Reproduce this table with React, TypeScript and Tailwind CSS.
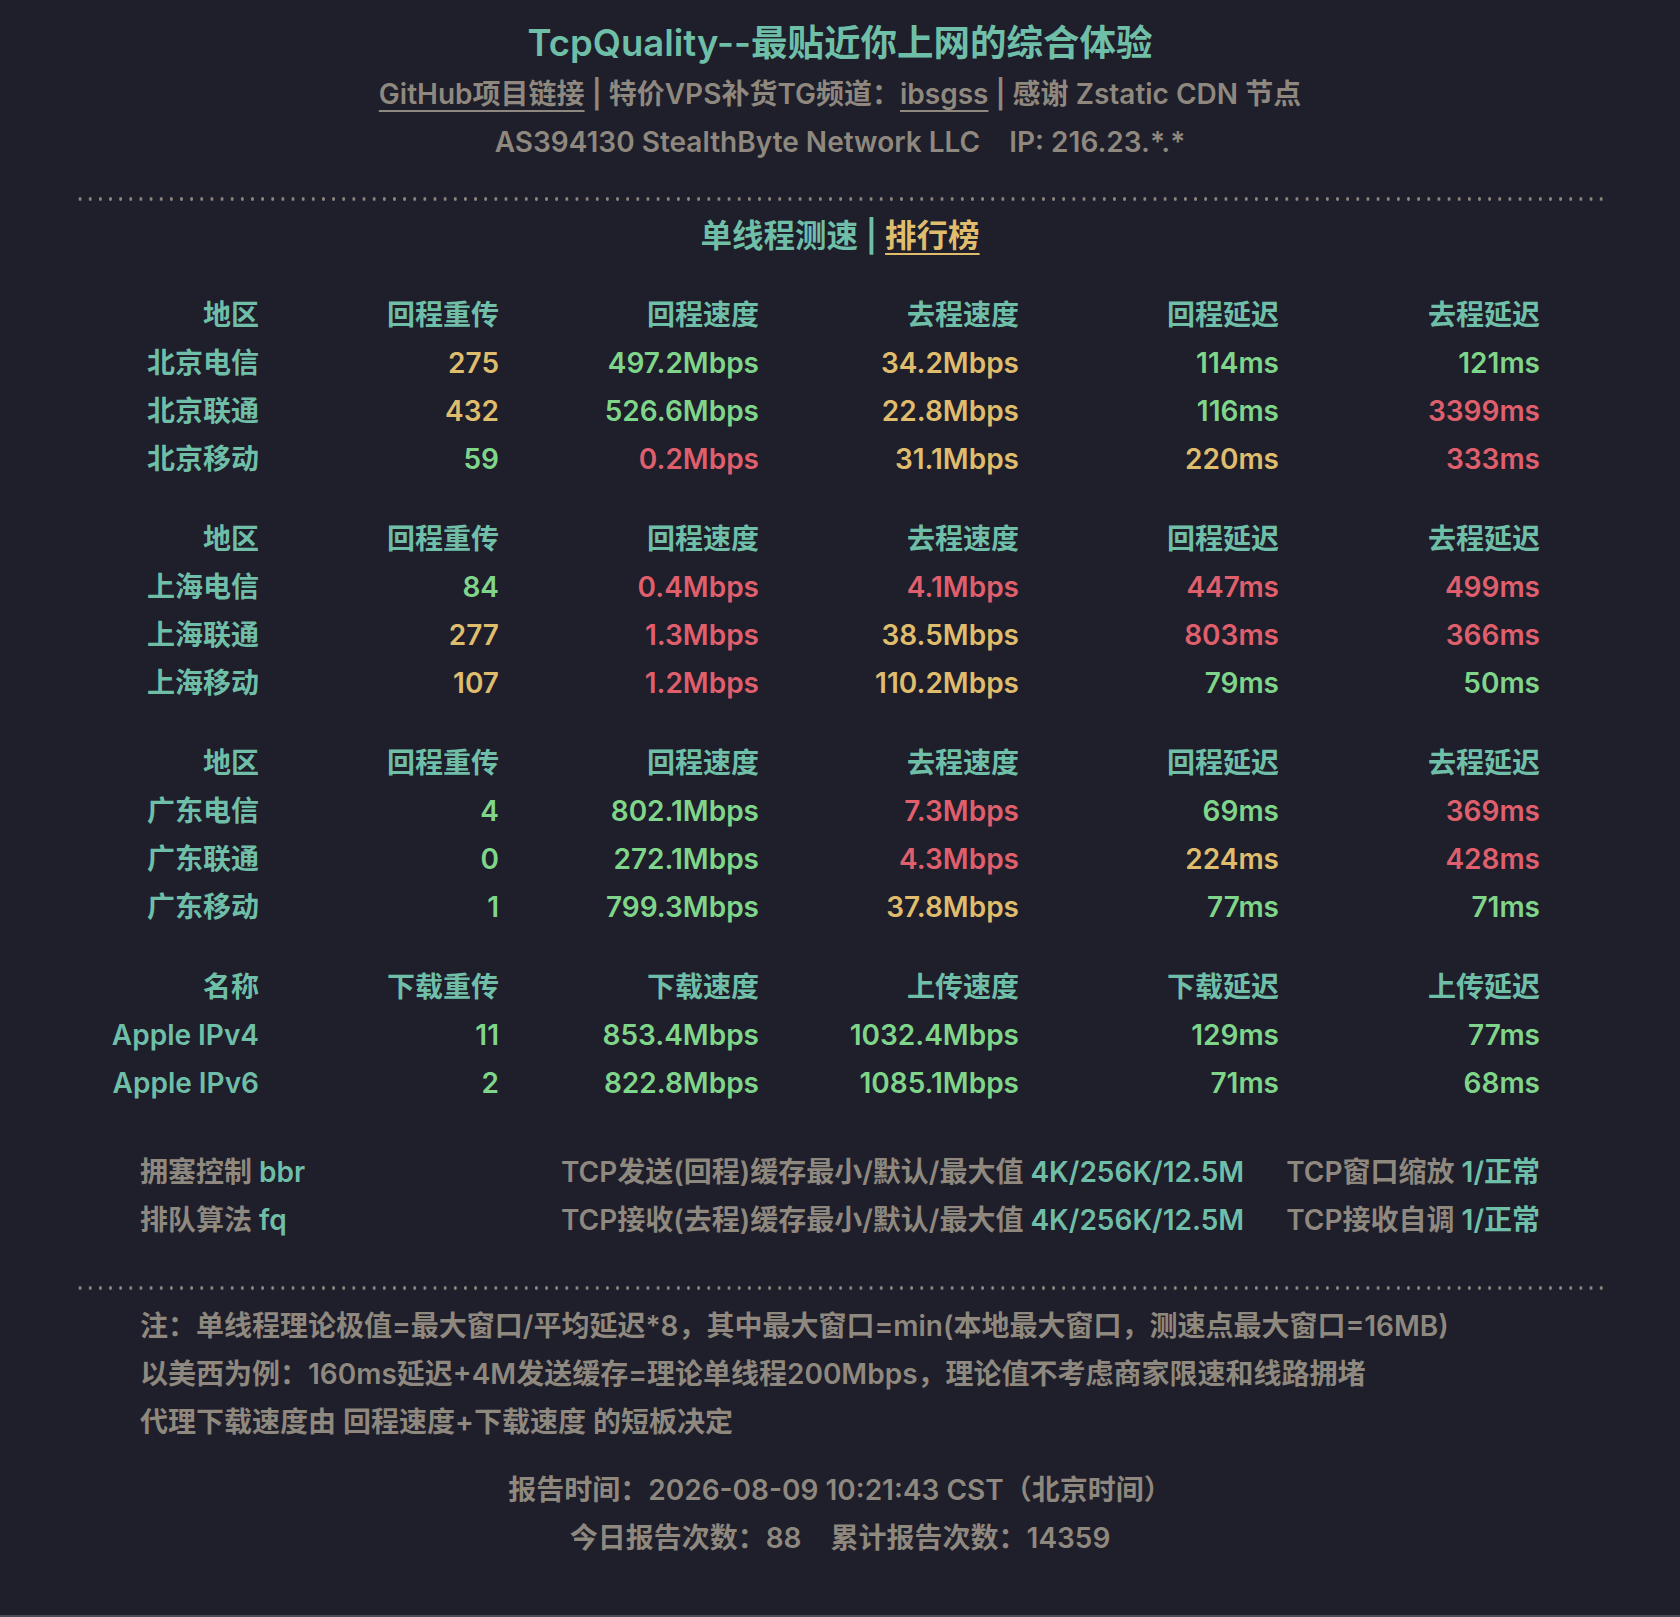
import React from 'react';

type Tone = 'g' | 'y' | 'r';

const toneClass: Record<Tone, string> = {
  g: 'text-[#7fd68a]',
  y: 'text-[#dfbd6d]',
  r: 'text-[#df5f6c]',
};

type Row = { name: string; cells: [string, Tone][] };
type Group = { head: string[]; rows: Row[] };

const regionHead = ['地区', '回程重传', '回程速度', '去程速度', '回程延迟', '去程延迟'];

const groups: Group[] = [
  {
    head: regionHead,
    rows: [
      { name: '北京电信', cells: [['275', 'y'], ['497.2Mbps', 'g'], ['34.2Mbps', 'y'], ['114ms', 'g'], ['121ms', 'g']] },
      { name: '北京联通', cells: [['432', 'y'], ['526.6Mbps', 'g'], ['22.8Mbps', 'y'], ['116ms', 'g'], ['3399ms', 'r']] },
      { name: '北京移动', cells: [['59', 'g'], ['0.2Mbps', 'r'], ['31.1Mbps', 'y'], ['220ms', 'y'], ['333ms', 'r']] },
    ],
  },
  {
    head: regionHead,
    rows: [
      { name: '上海电信', cells: [['84', 'g'], ['0.4Mbps', 'r'], ['4.1Mbps', 'r'], ['447ms', 'r'], ['499ms', 'r']] },
      { name: '上海联通', cells: [['277', 'y'], ['1.3Mbps', 'r'], ['38.5Mbps', 'y'], ['803ms', 'r'], ['366ms', 'r']] },
      { name: '上海移动', cells: [['107', 'y'], ['1.2Mbps', 'r'], ['110.2Mbps', 'y'], ['79ms', 'g'], ['50ms', 'g']] },
    ],
  },
  {
    head: regionHead,
    rows: [
      { name: '广东电信', cells: [['4', 'g'], ['802.1Mbps', 'g'], ['7.3Mbps', 'r'], ['69ms', 'g'], ['369ms', 'r']] },
      { name: '广东联通', cells: [['0', 'g'], ['272.1Mbps', 'g'], ['4.3Mbps', 'r'], ['224ms', 'y'], ['428ms', 'r']] },
      { name: '广东移动', cells: [['1', 'g'], ['799.3Mbps', 'g'], ['37.8Mbps', 'y'], ['77ms', 'g'], ['71ms', 'g']] },
    ],
  },
  {
    head: ['名称', '下载重传', '下载速度', '上传速度', '下载延迟', '上传延迟'],
    rows: [
      { name: 'Apple IPv4', cells: [['11', 'g'], ['853.4Mbps', 'g'], ['1032.4Mbps', 'g'], ['129ms', 'g'], ['77ms', 'g']] },
      { name: 'Apple IPv6', cells: [['2', 'g'], ['822.8Mbps', 'g'], ['1085.1Mbps', 'g'], ['71ms', 'g'], ['68ms', 'g']] },
    ],
  },
];

const Dots: React.FC<{ className?: string }> = ({ className = '' }) => (
  <div
    className={`ml-[75px] h-[4px] w-[1532px] bg-[radial-gradient(circle,#8a857b_1.6px,transparent_1.9px)] bg-[length:10.15px_4px] bg-repeat-x ${className}`}
  />
);

const GroupTable: React.FC<{ group: Group; first?: boolean }> = ({ group, first }) => (
  <div
    className={`mx-auto grid w-[1520px] grid-cols-[179px_240px_260px_260px_260px_261px] text-right leading-[48px] whitespace-nowrap ${first ? 'mt-[33px]' : 'mt-[32px]'}`}
  >
    {group.head.map((h) => (
      <div key={h} className="text-[#6fbfa8]">{h}</div>
    ))}
    {group.rows.map((row) => (
      <React.Fragment key={row.name}>
        <div className="text-[#6fbfa8]">{row.name}</div>
        {row.cells.map(([v, t], i) => (
          <div key={i} className={toneClass[t]}>{v}</div>
        ))}
      </React.Fragment>
    ))}
  </div>
);

export default function App() {
  return (
    <div className="flex min-h-[1617px] w-full flex-col bg-[#1f1e2b] font-['Inter','Noto_Sans_CJK_SC',sans-serif] text-[28px] font-semibold text-[#8e887e]">
      <div className="pt-[16px] text-center">
        <h1 className="text-[36.5px] leading-[54px] font-semibold text-[#6fbfa8]">TcpQuality--最贴近你上网的综合体验</h1>
        <div className="leading-[48px]">
          <span className="underline decoration-2 underline-offset-[6px]">GitHub项目链接</span>
          <span> | 特价VPS补货TG频道：</span>
          <span className="underline decoration-2 underline-offset-[6px]">ibsgss</span>
          <span> | 感谢 Zstatic CDN 节点</span>
        </div>
        <div className="leading-[48px]">
          AS394130 StealthByte Network LLC<span className="ml-[22px]"> IP: 216.23.*.*</span>
        </div>
      </div>

      <Dots className="mt-[31px]" />

      <div className="mt-[13px] text-center text-[31.5px] leading-[44px]">
        <span className="text-[#6fbfa8]">单线程测速 | </span>
        <span className="text-[#dfbd6d] underline decoration-2 underline-offset-[6px]">排行榜</span>
      </div>

      {groups.map((g, i) => (
        <GroupTable key={i} group={g} first={i === 0} />
      ))}

      <div className="mx-auto mt-[41px] grid w-[1400px] grid-cols-[421px_1fr_auto] leading-[48px] whitespace-nowrap">
        <div>拥塞控制 <span className="text-[#6fbfa8]">bbr</span></div>
        <div>TCP发送(回程)缓存最小/默认/最大值 <span className="text-[#6fbfa8]">4K/256K/12.5M</span></div>
        <div className="text-right">TCP窗口缩放 <span className="text-[#6fbfa8]">1/正常</span></div>
        <div>排队算法 <span className="text-[#6fbfa8]">fq</span></div>
        <div>TCP接收(去程)缓存最小/默认/最大值 <span className="text-[#6fbfa8]">4K/256K/12.5M</span></div>
        <div className="text-right">TCP接收自调 <span className="text-[#6fbfa8]">1/正常</span></div>
      </div>

      <Dots className="mt-[42px]" />

      <div className="mx-auto mt-[12px] w-[1400px] leading-[48px]">
        <p>注：单线程理论极值=最大窗口/平均延迟*8，其中最大窗口=min(本地最大窗口，测速点最大窗口=16MB)</p>
        <p>以美西为例：160ms延迟+4M发送缓存=理论单线程200Mbps，理论值不考虑商家限速和线路拥堵</p>
        <p>代理下载速度由 回程速度+下载速度 的短板决定</p>
      </div>

      <div className="mt-[20px] text-center leading-[48px]">
        <p>报告时间：2026-08-09 10:21:43 CST（北京时间）</p>
        <p>今日报告次数：88<span className="ml-[22px]"> 累计报告次数：14359</span></p>
      </div>

      <div className="mt-auto h-[2px] bg-[#4a4955]" />
    </div>
  );
}
